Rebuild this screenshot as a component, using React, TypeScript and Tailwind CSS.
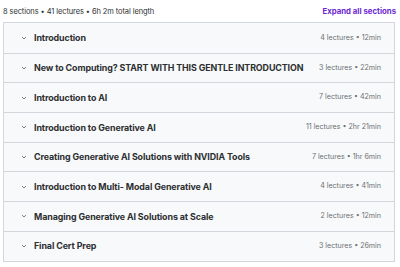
import React from 'react';

const SECTIONS = [
  { title: 'Introduction', meta: '4 lectures • 12min' },
  { title: 'New to Computing? START WITH THIS GENTLE INTRODUCTION', meta: '3 lectures • 22min' },
  { title: 'Introduction to AI', meta: '7 lectures • 42min' },
  { title: 'Introduction to Generative AI', meta: '11 lectures • 2hr 21min' },
  { title: 'Creating Generative AI Solutions with NVIDIA Tools', meta: '7 lectures • 1hr 6min' },
  { title: 'Introduction to Multi- Modal Generative AI', meta: '4 lectures • 41min' },
  { title: 'Managing Generative AI Solutions at Scale', meta: '2 lectures • 12min' },
  { title: 'Final Cert Prep', meta: '3 lectures • 26min' },
];

const Chevron = () => (
  <svg width="8" height="8" viewBox="0 0 24 24" fill="none" stroke="#4b5057" strokeWidth="2.2" strokeLinecap="round" strokeLinejoin="round">
    <path d="M7 10l5 5 5-5" />
  </svg>
);

export default function App() {
  return (
    <div className="w-[400px] h-[267px] bg-white text-[#2d2f31] pt-[5px] px-[3px]" style={{ fontFamily: 'Inter, "Noto Sans", sans-serif' }}>
      <div className="flex items-center justify-between h-[13px] mb-[4px] pr-[1px]">
        <span className="text-[7.5px] text-[#2d2f31] tracking-[-0.1px]">8 sections • 41 lectures • 6h 2m total length</span>
        <span className="text-[7.8px] font-bold text-[#6d28d2]">Expand all sections</span>
      </div>
      <div className="w-[392px] border border-[#d1d7dc]">
        {SECTIONS.map((s, i) => (
          <div
            key={i}
            className={`flex items-center justify-between h-[29.7px] bg-[#f7f9fa] pl-[16px] pr-[13px] ${i > 0 ? 'border-t border-[#d1d7dc]' : ''}`}
          >
            <div className="flex items-center gap-[6px]">
              <Chevron />
              <span className="text-[8.9px] font-bold tracking-[-0.1px]">{s.title}</span>
            </div>
            <span className="text-[7.1px] text-[#6a6f73]">{s.meta}</span>
          </div>
        ))}
      </div>
    </div>
  );
}
